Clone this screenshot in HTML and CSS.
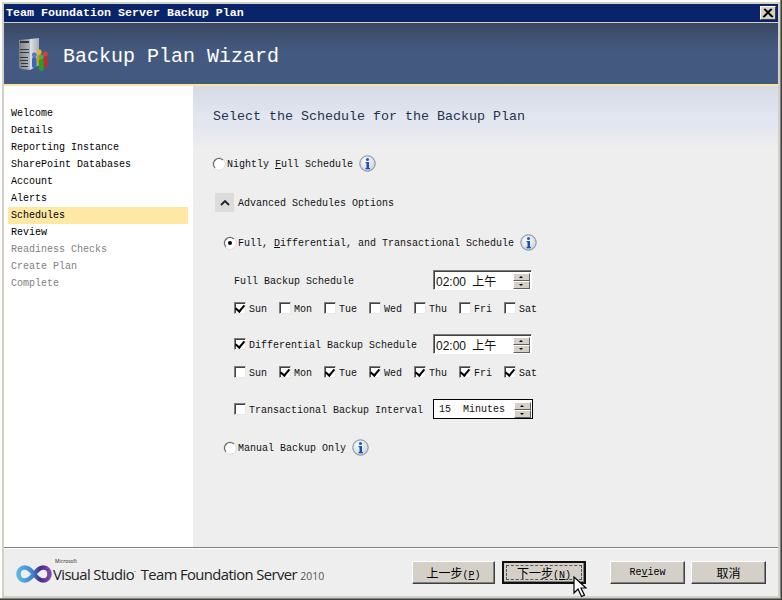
FILE: index.html
```html
<!DOCTYPE html>
<html lang="en">
<head>
<meta charset="utf-8">
<title>Team Foundation Server Backup Plan</title>
<link rel="stylesheet" href="styles.css">
</head>
<body>
<div class="window">
  <div class="titlebar">
    <span class="title">Team Foundation Server Backup Plan</span>
    <span class="close"><svg width="12" height="10" viewBox="0 0 12 10"><path d="M2 1l8 8M3 1l8 8M10 1l-8 8M9 1l-8 8" stroke="#000" stroke-width="1.2" fill="none"/></svg></span>
  </div>
  <header class="banner">
    <svg class="server" width="30" height="34" viewBox="0 0 30 34">
      <defs>
        <linearGradient id="srv-side" x1="0" x2="1" y1="0" y2="0"><stop offset="0" stop-color="#e0e3e6"/><stop offset="1" stop-color="#a8adb3"/></linearGradient>
        <linearGradient id="srv-front" x1="0" x2="1" y1="0" y2="0"><stop offset="0" stop-color="#7c8187"/><stop offset="1" stop-color="#b4b9bf"/></linearGradient>
      </defs>
      <path d="M0 3l11-1v31l-9-1-2-2z" fill="url(#srv-front)"/>
      <path d="M11 2l9-1v27l-9 5z" fill="url(#srv-side)"/>
      <path d="M1 4h9v2H1zM1 12h9v1H1zM1 15h9v1H1zM1 20l8 0v1H1zM1 23h8v1H1zM2 26h7v1H2zM2 29h7v1H2z" fill="#33363a"/>
      <rect x="13" y="20" width="4.600" height="11" rx="2" fill="#3868b8"/><circle cx="15.300" cy="18" r="2.400" fill="#4a7cc8"/>
      <rect x="18" y="17" width="4.600" height="12" rx="2" fill="#e09a18"/><circle cx="20.300" cy="15" r="2.400" fill="#f0b030"/>
      <rect x="24" y="19" width="4.600" height="11" rx="2" fill="#c42c2c"/><circle cx="26.300" cy="17" r="2.400" fill="#d84040"/>
      <rect x="19.800" y="22" width="4.800" height="12" rx="2" fill="#2c9a2c"/><circle cx="22.200" cy="20" r="2.500" fill="#48b048"/>
    </svg>
    <span class="banner-title">Backup Plan Wizard</span>
  </header>
  <div class="stripe"></div>
  <div class="body">
    <nav class="steps">
      <div class="step">Welcome</div>
      <div class="step">Details</div>
      <div class="step">Reporting Instance</div>
      <div class="step">SharePoint Databases</div>
      <div class="step">Account</div>
      <div class="step">Alerts</div>
      <div class="step current">Schedules</div>
      <div class="step">Review</div>
      <div class="step off">Readiness Checks</div>
      <div class="step off">Create Plan</div>
      <div class="step off">Complete</div>
    </nav>
    <main class="main">
      <h1 class="heading">Select the Schedule for the Backup Plan</h1>

      <div class="row opt-nightly">
        <span class="radio"></span>
        <span class="label"><span>Nightly <u>F</u>ull Schedule</span></span>
        <svg class="info" width="17" height="17" viewBox="0 0 17 17"><use href="#info-icon"/></svg>
      </div>

      <div class="row opt-adv">
        <span class="expander"><svg width="10" height="6" viewBox="0 0 10 6"><path d="M1 5l4-4 4 4" stroke="#222" stroke-width="1.8" fill="none"/></svg></span>
        <span class="label">Advanced Schedules Options</span>
      </div>

      <div class="row opt-full">
        <span class="radio on"></span>
        <span class="label"><span>Full, <u>D</u>ifferential, and Transactional Schedule</span></span>
        <svg class="info" width="17" height="17" viewBox="0 0 17 17"><use href="#info-icon"/></svg>
      </div>

      <div class="schedule first">
        <span class="label">Full Backup Schedule</span>
        <div class="spin"><span class="spin-text">02:00 上午</span><span class="arrows"><i class="up"></i><i class="dn"></i></span></div>
      </div>
      <div class="days">
        <span class="day"><span class="check on"></span>Sun</span>
        <span class="day"><span class="check"></span>Mon</span>
        <span class="day"><span class="check"></span>Tue</span>
        <span class="day"><span class="check"></span>Wed</span>
        <span class="day"><span class="check"></span>Thu</span>
        <span class="day"><span class="check"></span>Fri</span>
        <span class="day"><span class="check"></span>Sat</span>
      </div>

      <div class="schedule second">
        <span class="day"><span class="check on"></span>Differential Backup Schedule</span>
        <div class="spin"><span class="spin-text">02:00 上午</span><span class="arrows"><i class="up"></i><i class="dn"></i></span></div>
      </div>
      <div class="days">
        <span class="day"><span class="check"></span>Sun</span>
        <span class="day"><span class="check on"></span>Mon</span>
        <span class="day"><span class="check on"></span>Tue</span>
        <span class="day"><span class="check on"></span>Wed</span>
        <span class="day"><span class="check on"></span>Thu</span>
        <span class="day"><span class="check on"></span>Fri</span>
        <span class="day"><span class="check on"></span>Sat</span>
      </div>

      <div class="schedule third">
        <span class="day"><span class="check"></span>Transactional Backup Interval</span>
        <div class="spin dark"><span class="spin-text">15&nbsp; Minutes</span><span class="arrows"><i class="up"></i><i class="dn"></i></span></div>
      </div>

      <div class="row opt-manual">
        <span class="radio"></span>
        <span class="label"><span>Manual Backup Only</span></span>
        <svg class="info" width="17" height="17" viewBox="0 0 17 17"><use href="#info-icon"/></svg>
      </div>
    </main>
  </div>
  <footer class="footer">
    <div class="logo">
      <svg class="infinity" width="36" height="20" viewBox="0 0 36 20">
        <defs>
          <linearGradient id="inf" x1="0" x2="1" y1="0" y2="0"><stop offset="0" stop-color="#5ab4e4"/><stop offset=".45" stop-color="#3f86cc"/><stop offset=".7" stop-color="#4a2a90"/><stop offset="1" stop-color="#7a4aa8"/></linearGradient>
        </defs>
        <path d="M18 10c-3-4-6-6.500-9.500-6.500C5 3.500 2.500 6.500 2.500 10s2.500 6.500 6 6.500c3.500 0 6.500-2.500 9.500-6.500s6-6.500 9.500-6.500c3.500 0 6 3 6 6.500s-2.500 6.500-6 6.500c-3.500 0-6.500-2.500-9.500-6.500z" fill="none" stroke="url(#inf)" stroke-width="4.500"/>
      </svg>
      <span class="logo-text"><span class="ms">Microsoft</span>Visual Studio<sup class="tm">·</sup> Team Foundation Server <span class="year">2010</span></span>
    </div>
    <div class="buttons">
      <button class="btn" type="button"><span class="cjk">上一步</span>(<u>P</u>)</button>
      <button class="btn default" type="button"><span class="focus"><span class="cjk">下一步</span>(<u>N</u>)</span></button>
      <button class="btn review" type="button">Re<u>v</u>iew</button>
      <button class="btn cancel" type="button"><span class="cjk">取消</span></button>
    </div>
  </footer>
  <svg class="cursor" width="14" height="22" viewBox="0 0 14 22"><path d="M1 1v16l4-4 3.500 7.500 3-1.300L8 12h5z" fill="#fff" stroke="#000" stroke-width="1.200"/></svg>
</div>
<svg class="defs" width="0" height="0">
  <defs>
    <radialGradient id="info-bg" cx=".4" cy=".35" r=".8"><stop offset="0" stop-color="#ffffff"/><stop offset="1" stop-color="#c4cad4"/></radialGradient>
    <g id="info-icon">
      <circle cx="8.500" cy="8.500" r="7.700" fill="url(#info-bg)" stroke="#7f8794"/>
      <circle cx="8.500" cy="4.500" r="1.600" fill="#1e5fc8"/>
      <path d="M6.500 7h3.500v6h1v1.200H6.500V13h1V8.200h-1z" fill="#1a4fb8"/>
    </g>
  </defs>
</svg>
</body>
</html>
```
FILE: styles.css
```css
* { box-sizing: border-box; }
html, body { margin: 0; padding: 0; }
body {
  width: 782px;
  height: 600px;
  overflow: hidden;
  background: #d4d0c8;
  font-family: "Liberation Mono", monospace;
  font-size: 10px;
  color: #000;
}
u { text-underline-offset: 1px; }
.defs { position: absolute; }

.window {
  position: relative;
  width: 782px;
  height: 600px;
  display: flex;
  flex-direction: column;
  padding: 4px;
  background: #d4d0c8;
  box-shadow:
    inset -1px -1px 0 #404040,
    inset -2px -2px 0 #808080,
    inset 2px 2px 0 #fff,
    inset 3px 3px 0 #d4d0c8;
}

.titlebar {
  height: 18px;
  flex: none;
  display: flex;
  align-items: center;
  justify-content: space-between;
  padding: 0 2px 0 2px;
  background: #0a246a;
  color: #fff;
}
.title { font-size: 11.67px; font-weight: bold; }
.close {
  width: 16px;
  height: 14px;
  display: flex;
  align-items: center;
  justify-content: center;
  background: #d4d0c8;
  border: 1px solid;
  border-color: #fff #404040 #404040 #fff;
}

.banner {
  height: 61px;
  flex: none;
  margin-top: 1px;
  display: flex;
  align-items: center;
  padding-left: 15px;
  background: linear-gradient(#39465f 0, #3f5273 14px, #44597f 28px, #435a80 100%);
  color: #fff;
}
.server { flex: none; }
.banner-title { font-size: 20px; margin: 6px 0 0 14px; }
.stripe { height: 2px; flex: none; background: #fce59c; }

.body { flex: 1; min-height: 0; display: flex; }
.steps {
  width: 189px;
  flex: none;
  padding: 19px 5px 0 4px;
  background: #fff;
}
.step { height: 17px; line-height: 17px; padding-left: 3px; }
.step.current { background: #fee8a4; }
.step.off { color: #7f7f7f; }

.main {
  flex: 1;
  min-width: 0;
  background: linear-gradient(#d6dbe6 0, #dce0ea 16px, #e1e6f1 30px, #e4e6ef 42px, #eeeeee 62px);
  color: #111;
}
.heading {
  margin: 23px 0 0 20px;
  height: 16px;
  font-size: 13.33px;
  line-height: 16px;
  font-weight: normal;
  color: #24344e;
}

.row { display: flex; align-items: center; }
.label { white-space: nowrap; padding-top: 2px; }
.radio {
  width: 12px;
  height: 12px;
  flex: none;
  border-radius: 50%;
  background: #fff;
  border: 1px solid;
  border-color: #5a5a5a #fff #fff #5a5a5a;
  box-shadow: 0 0 0 .5px #c8c8c8;
  display: flex;
  align-items: center;
  justify-content: center;
}
.radio.on::after { content: ""; width: 4px; height: 4px; border-radius: 50%; background: #000; }

.opt-nightly { height: 17px; margin: 30px 0 0 20px; }
.opt-nightly .label { margin-left: 2px; }
.opt-nightly .info { margin-left: 6px; }

.opt-adv { height: 19px; margin: 21px 0 0 22px; }
.expander {
  width: 19px;
  height: 19px;
  display: flex;
  align-items: center;
  justify-content: center;
  background: #dcdcdc;
}
.opt-adv .label { margin-left: 4px; }

.opt-full { height: 17px; margin: 22px 0 0 31px; }
.opt-full .label { margin-left: 2px; }
.opt-full .info { margin-left: 6px; }

.schedule {
  display: grid;
  grid-template-columns: 199px auto;
  align-items: center;
  height: 20px;
  margin-left: 41px;
}
.schedule.first { margin-top: 19px; }
.schedule.second { margin-top: 19px; }
.schedule.third { margin-top: 20px; }

.days {
  display: grid;
  grid-template-columns: repeat(7, 45px);
  height: 14px;
  margin: 11px 0 0 41px;
}
.day { display: flex; align-items: center; white-space: nowrap; padding-top: 2px; }
.check {
  width: 12px;
  height: 12px;
  flex: none;
  margin: -2px 3px 0 0;
  background: #fff;
  border: 1px solid;
  border-color: #808080 #e8e8e8 #e8e8e8 #808080;
  box-shadow: inset 1px 1px 0 #404040;
  position: relative;
}
.check.on::after {
  content: "";
  position: absolute;
  left: 2px;
  top: 0;
  width: 4px;
  height: 7px;
  border: solid #000;
  border-width: 0 2px 2px 0;
  transform: rotate(40deg);
}

.spin {
  width: 99px;
  height: 20px;
  display: flex;
  align-items: center;
  justify-content: space-between;
  background: #fff;
  border: 1px solid;
  border-color: #7a7a7a #fff #fff #7a7a7a;
  box-shadow: inset 1px 1px 0 #404040;
  padding: 2px 1px 1px 2px;
  font-family: "Liberation Sans", "Noto Sans CJK SC", sans-serif;
  font-size: 12px;
  word-spacing: 3px;
}
.spin.dark { width: 100px; border-color: #000; box-shadow: none; padding-left: 5px; }
.spin.dark .spin-text { font-family: "Liberation Mono", monospace; font-size: 10px; word-spacing: 0; }
.arrows { width: 17px; height: 16px; display: flex; flex-direction: column; flex: none; }
.arrows i { flex: 1; background: #d4d0c8; border: 1px solid; border-color: #fff #606060 #606060 #fff; position: relative; }
.arrows i::after {
  content: "";
  position: absolute;
  left: 5px;
  top: 2px;
  border: 2px solid transparent;
}
.arrows .up::after { border-bottom-color: #000; border-top: 0; }
.arrows .dn::after { border-top-color: #000; border-bottom: 0; }

.opt-manual { height: 17px; margin: 20px 0 0 31px; }
.opt-manual .label { margin-left: 2px; }
.opt-manual .info { margin-left: 6px; }

.footer {
  height: 49px;
  flex: none;
  display: flex;
  align-items: flex-start;
  justify-content: space-between;
  background: #eeeeee;
  border-top: 1px solid #808080;
  box-shadow: inset 0 1px 0 #fff;
  padding: 13px 12px 0 12px;
}
.logo { display: flex; align-items: center; height: 26px; }
.infinity { flex: none; }
.logo-text {
  position: relative;
  font-family: "Open Sans", "Noto Sans", sans-serif;
  font-size: 14.8px;
  letter-spacing: -.59px;
  color: #222;
  white-space: nowrap;
  margin-left: 1px;
}
.ms { position: absolute; left: 2px; top: -6px; font-size: 5px; letter-spacing: 0; }
.tm { font-size: 8px; line-height: 0; margin-right: 2px; }
.year { font-size: 10.5px; letter-spacing: 0; color: #555; }

.buttons { display: flex; }
.btn {
  width: 83px;
  height: 23px;
  padding: 0;
  background: #d4d0c8;
  border: 1px solid;
  border-color: #fff #404040 #404040 #fff;
  box-shadow: inset -1px -1px 0 #808080;
  font-family: "Liberation Mono", "Noto Sans CJK SC", monospace;
  font-size: 10px;
  color: #000;
}
.cjk { font-family: "Noto Sans CJK SC", sans-serif; font-size: 12px; }
.btn.default {
  width: 84px;
  margin-left: 7px;
  border: 2px solid #111;
  box-shadow: inset -1px -1px 0 #808080;
}
.focus { display: block; margin: 2px; height: 15px; line-height: 13px; border: 1px dashed #555; }
.btn.review { width: 75px; margin-left: 24px; }
.btn.cancel { width: 75px; margin-left: 6px; }

.cursor { position: absolute; left: 573px; top: 576px; }
```
